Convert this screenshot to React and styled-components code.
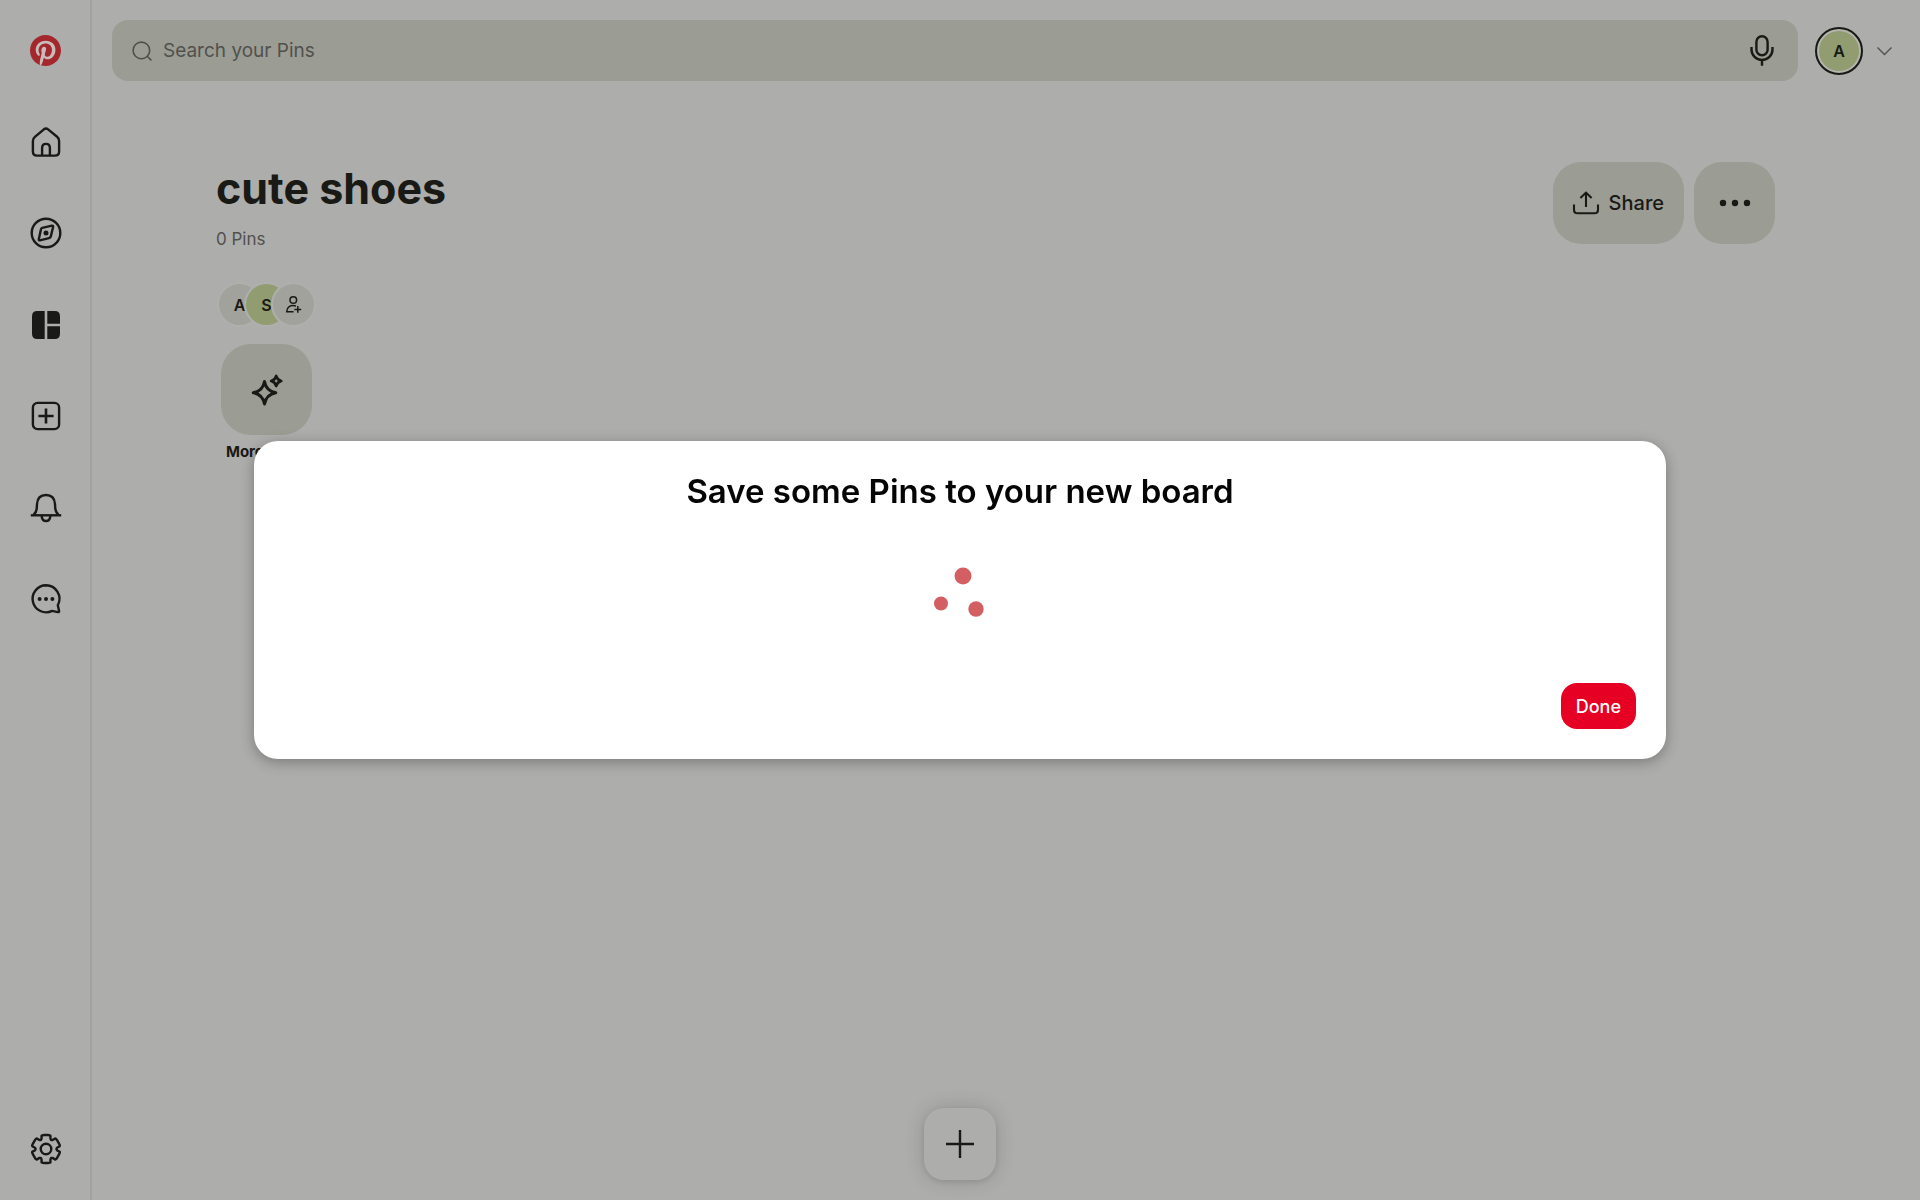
import React from "react";
import styled, { createGlobalStyle } from "styled-components";

const color = {
  page: "#adadab",
  line: "#a2a2a0",
  field: "#9b9c94",
  pale: "#a1a29b",
  green: "#919c70",
  ink: "#191916",
  muted: "#51514c",
  ring: "#b4b4b1",
};

const GlobalStyle = createGlobalStyle`
  *, *::before, *::after { box-sizing: border-box; }
  body {
    margin: 0;
    background: ${color.page};
    color: ${color.ink};
    font-family: Inter, "Liberation Sans", sans-serif;
  }
  button, input { font: inherit; color: inherit; }
  button { border: 0; padding: 0; background: none; cursor: pointer; }
  h1, h2, p { margin: 0; }
`;

const Shell = styled.div`
  display: flex;
  min-height: 100vh;
`;

const Sidebar = styled.aside`
  display: flex;
  flex-direction: column;
  justify-content: space-between;
  flex: none;
  width: 92px;
  padding: 5px 0 6px;
  border-right: 2px solid ${color.line};
`;

const Nav = styled.nav`
  display: flex;
  flex-direction: column;
  height: 549px;
`;

const NavLink = styled.a`
  display: flex;
  align-items: center;
  justify-content: center;
  flex: ${(p) => (p.$fixed ? "none" : "1")};
  height: 91px;
  padding-left: 1px;
  color: inherit;
`;

const Glyph = styled.svg`
  display: block;
  flex: none;
  width: ${(p) => p.$w || 32}px;
  height: ${(p) => p.$h || p.$w || 32}px;
  fill: none;
  stroke: currentColor;
  stroke-width: ${(p) => p.$stroke || 2.4};
  overflow: visible;
`;

const Main = styled.main`
  display: flex;
  flex-direction: column;
  flex: 1;
  min-width: 0;
`;

const TopBar = styled.header`
  display: flex;
  align-items: center;
  padding: 20px 28px 0 20px;
`;

const Search = styled.label`
  display: flex;
  align-items: center;
  flex: 1;
  gap: 11px;
  height: 61px;
  padding: 0 24px 0 20px;
  margin-right: 17px;
  border-radius: 16px;
  background: ${color.field};
  color: ${color.muted};
`;

const SearchInput = styled.input`
  flex: 1;
  min-width: 0;
  padding: 0;
  border: 0;
  outline: 0;
  background: none;
  font-size: 19px;
  line-height: 28px;
  &::placeholder { color: ${color.muted}; opacity: 1; }
`;

const IconButton = styled.button`
  display: flex;
  color: ${(p) => (p.$muted ? color.muted : color.ink)};
`;

const Profile = styled.button`
  display: flex;
  align-items: center;
  justify-content: center;
  width: 48px;
  height: 48px;
  margin-right: 14px;
  border: 2px solid ${color.ink};
  border-radius: 50%;
  background: ${color.green};
  box-shadow: inset 0 0 0 2px ${color.ring};
  font-size: 16px;
  font-weight: 600;
`;

const Board = styled.section`
  padding: 81px 145px 0 124px;
`;

const BoardHead = styled.div`
  display: flex;
  justify-content: space-between;
  align-items: flex-start;
`;

const Title = styled.h1`
  font-size: 43px;
  line-height: 52px;
  font-weight: 700;
`;

const Count = styled.p`
  margin-top: 13px;
  font-size: 17px;
  line-height: 24px;
  color: ${color.muted};
`;

const Actions = styled.div`
  display: flex;
  gap: 10px;
`;

const Action = styled.button`
  display: flex;
  align-items: center;
  justify-content: center;
  gap: 10px;
  height: 82px;
  width: ${(p) => (p.$square ? "81px" : "auto")};
  padding: ${(p) => (p.$square ? 0 : "0 20px")};
  border-radius: 28px;
  background: ${color.field};
  font-size: 20px;
  font-weight: 500;
`;

const People = styled.div`
  display: flex;
  margin-top: 33px;
  padding-left: 3px;
`;

const Person = styled.button`
  display: flex;
  align-items: center;
  justify-content: center;
  width: 41px;
  height: 41px;
  border-radius: 50%;
  background: ${(p) => (p.$green ? color.green : color.pale)};
  box-shadow: 0 0 0 2px #afafad;
  font-size: 16px;
  font-weight: 600;
  & + & { margin-left: -14px; }
`;

const Tool = styled.button`
  display: flex;
  flex-direction: column;
  align-items: center;
  gap: 7px;
  width: 91px;
  margin: 19px 0 0 5px;
  font-size: 15px;
  line-height: 20px;
  font-weight: 700;
  white-space: nowrap;
`;

const Tile = styled.span`
  display: flex;
  align-items: center;
  justify-content: center;
  width: 91px;
  height: 91px;
  border-radius: 30px;
  background: ${color.field};
`;

const Floating = styled.div`
  position: fixed;
  inset: auto 0 20px 0;
  display: flex;
  justify-content: center;
`;

const AddButton = styled.button`
  display: flex;
  align-items: center;
  justify-content: center;
  width: 72px;
  height: 72px;
  border-radius: 20px;
  background: ${color.page};
  box-shadow: 0 0 20px rgba(0, 0, 0, 0.16), 0 2px 6px rgba(0, 0, 0, 0.1);
`;

const Backdrop = styled.div`
  position: fixed;
  inset: 0;
  display: flex;
  align-items: center;
  justify-content: center;
  padding: 0 254px;
`;

const Dialog = styled.section`
  display: flex;
  flex-direction: column;
  flex: 1;
  padding: 28px 30px 30px;
  border-radius: 24px;
  background: #fff;
  box-shadow: 0 3px 14px rgba(0, 0, 0, 0.3);
`;

const DialogTitle = styled.h2`
  font-size: 33px;
  line-height: 44px;
  font-weight: 600;
  color: #050505;
  text-align: center;
`;

const Loading = styled.div`
  display: flex;
  justify-content: center;
  padding: 54px 0 66px;
`;

const DialogFooter = styled.footer`
  display: flex;
  justify-content: flex-end;
`;

const DoneButton = styled.button`
  height: 46px;
  padding: 0 15px;
  border-radius: 16px;
  background: #e60023;
  color: #fff;
  font-size: 18px;
  font-weight: 500;
`;

/* Six-toothed cog: three radii per tooth, every corner softened with a quadratic. */
const cogPath = (() => {
  const pts = [];
  for (let i = 0; i < 6; i += 1) {
    const mid = -90 + i * 60;
    [[-30, 10.2], [-22, 11.6], [-18, 14.7], [18, 14.7], [22, 11.6]].forEach(([offset, r]) => {
      const a = ((mid + offset) * Math.PI) / 180;
      pts.push([16 + r * Math.cos(a), 16 + r * Math.sin(a)]);
    });
  }
  const n = pts.length;
  const lerp = (a, b, t) => [a[0] + (b[0] - a[0]) * t, a[1] + (b[1] - a[1]) * t];
  return (
    pts
      .map((p, i) => {
        const before = lerp(p, pts[(i + n - 1) % n], 0.3);
        const after = lerp(p, pts[(i + 1) % n], 0.3);
        return `${i ? "L" : "M"}${before.join(" ")}Q${p.join(" ")} ${after.join(" ")}`;
      })
      .join("") + "Z"
  );
})();

const navItems = [
  {
    label: "Home",
    art: (
      <>
        <path d="M13.9 3.3 4.9 10.8Q2.9 12.4 2.9 15v10.4q0 4.2 4.2 4.2h17.8q4.2 0 4.2-4.2V15q0-2.6-2-4.2L18.1 3.3q-2.1-1.7-4.2 0Z" />
        <path d="M12.1 29.2V22q0-4.1 3.9-4.1t3.9 4.1v7.2" />
      </>
    ),
  },
  {
    label: "Explore",
    art: (
      <>
        <circle cx="16" cy="16" r="14.3" />
        <path
          d="M12.2 10.8 22 8.7q1.5-.2 1.1 1.3L20.8 19.4q-.4 1.5-1.8 1.8L9.9 23.3q-1.4.3-1.1-1.1l2.1-9.8q.2-1.3 1.3-1.6Z"
          strokeLinejoin="round"
        />
        <circle cx="16" cy="16" r="2.5" fill="currentColor" stroke="none" />
      </>
    ),
  },
  {
    label: "Your boards",
    art: (
      <g fill="currentColor" stroke="none">
        <path d="M14.7 2v28H7.2Q2 30 2 24.8V7.2Q2 2 7.2 2Z" />
        <path d="M17.3 2h7.5Q30 2 30 7.2v7.5H17.3Z" />
        <path d="M17.3 17.3H30v7.5Q30 30 24.8 30h-7.5Z" />
      </g>
    ),
  },
  {
    label: "Create",
    art: (
      <>
        <rect x="2.9" y="2.9" width="26.2" height="26.2" rx="4.6" />
        <path d="M16 8.4v15.2M8.4 16h15.2" strokeWidth="2.6" />
      </>
    ),
  },
  {
    label: "Notifications",
    art: (
      <>
        <path d="M.8 23.3h30.4" />
        <path d="M3.6 22.8Q6.6 20.4 6.8 15.4L7 12Q7.6 3 16 3t9 9l.2 3.4q.2 5 3.2 7.4" />
        <path d="M11.8 24v1q.5 4 4.2 4t4.2-4v-1" />
      </>
    ),
  },
  {
    label: "Messages",
    art: (
      <>
        <path
          d="M16 2.3a13.5 13.5 0 1 0 6.1 25.6l5.8 1.2q1.4.3 1.2-1.2l-1.3-5.7A13.5 13.5 0 0 0 16 2.3Z"
        />
        <g fill="currentColor" stroke="none">
          <circle cx="9.6" cy="16" r="2" />
          <circle cx="16" cy="16" r="2" />
          <circle cx="22.4" cy="16" r="2" />
        </g>
      </>
    ),
  },
];

export default function App() {
  return (
    <>
      <GlobalStyle />
      <Shell>
        <Sidebar>
          <div>
            <NavLink href="#" aria-label="Pinterest" $fixed>
              <Glyph viewBox="0 0 24 24" $w={31}>
                <circle cx="12" cy="12" r="11.6" fill="#c9bdb9" stroke="none" />
                <path
                  fill="#a3272c"
                  stroke="none"
                  d="M0 12c0 5.123 3.211 9.497 7.73 11.218-.11-.937-.227-2.482.025-3.566.217-.932 1.401-5.938 1.401-5.938s-.357-.715-.357-1.774c0-1.66.962-2.9 2.161-2.9 1.02 0 1.512.765 1.512 1.682 0 1.025-.653 2.557-.99 3.978-.281 1.189.597 2.159 1.769 2.159 2.123 0 3.756-2.239 3.756-5.471 0-2.861-2.056-4.86-4.991-4.86-3.398 0-5.393 2.549-5.393 5.184 0 1.027.395 2.127.889 2.726a.36.36 0 0 1 .083.343c-.091.378-.293 1.189-.332 1.355-.053.218-.173.265-.4.159-1.492-.694-2.424-2.875-2.424-4.627 0-3.769 2.737-7.229 7.892-7.229 4.144 0 7.365 2.953 7.365 6.899 0 4.117-2.595 7.431-6.199 7.431-1.211 0-2.348-.63-2.738-1.373 0 0-.599 2.282-.744 2.84-.282 1.084-1.064 2.456-1.549 3.235C9.584 23.815 10.77 24 12 24c6.627 0 12-5.373 12-12S18.627 0 12 0 0 5.373 0 12"
                />
              </Glyph>
            </NavLink>
            <Nav aria-label="Main">
              {navItems.map((item) => (
                <NavLink key={item.label} href="#" aria-label={item.label}>
                  <Glyph viewBox="0 0 32 32">{item.art}</Glyph>
                </NavLink>
              ))}
            </Nav>
          </div>
          <NavLink href="#" aria-label="Settings" $fixed>
            <Glyph viewBox="0 0 32 32">
              <path d={cogPath} strokeLinejoin="round" />
              <circle cx="16" cy="16" r="5.3" />
            </Glyph>
          </NavLink>
        </Sidebar>

        <Main>
          <TopBar>
            <Search>
              <Glyph viewBox="0 0 20 20" $w={20} $stroke={1.6}>
                <circle cx="9.4" cy="9.4" r="8.3" />
                <path d="m15.2 15.2 4.2 4.2" />
              </Glyph>
              <SearchInput type="search" placeholder="Search your Pins" aria-label="Search your Pins" />
              <IconButton type="button" aria-label="Search by voice">
                <Glyph viewBox="0 0 24 31" $w={24} $h={31}>
                  <rect x="6.4" y="1.3" width="11.2" height="19" rx="5.6" />
                  <path d="M1.5 12v2.4a10.5 10.5 0 0 0 21 0V12M12 25v5.8" />
                </Glyph>
              </IconButton>
            </Search>
            <Profile type="button" aria-label="Your profile">A</Profile>
            <IconButton type="button" aria-label="Accounts" $muted>
              <Glyph viewBox="0 0 15 9" $w={15} $h={9} $stroke={1.4}>
                <path d="m.5 1.5 7 7 7-7" />
              </Glyph>
            </IconButton>
          </TopBar>

          <Board>
            <BoardHead>
              <div>
                <Title>cute shoes</Title>
                <Count>0 Pins</Count>
              </div>
              <Actions>
                <Action type="button">
                  <Glyph viewBox="0 0 26 24" $w={26} $h={24} $stroke={2.1}>
                    <path d="M1 13.5v5.2q0 3.6 3.6 3.6h16.8q3.6 0 3.6-3.6v-5.2M13 16V2M7.4 7 13 1.6 18.6 7" />
                  </Glyph>
                  Share
                </Action>
                <Action type="button" aria-label="More options" $square>
                  <Glyph viewBox="0 0 32 8" $w={32} $h={8}>
                    <g fill="currentColor" stroke="none">
                      <circle cx="4" cy="4" r="3.2" />
                      <circle cx="16" cy="4" r="3.2" />
                      <circle cx="28" cy="4" r="3.2" />
                    </g>
                  </Glyph>
                </Action>
              </Actions>
            </BoardHead>
            <People>
              <Person type="button">A</Person>
              <Person type="button" $green>S</Person>
              <Person type="button" aria-label="Invite collaborators">
                <Glyph viewBox="0 0 16 17" $w={16} $h={17} $stroke={1.5}>
                  <circle cx="7.3" cy="4" r="3.3" />
                  <path d="M10 9.9q-9-1.6-9.3 5.8h6.9M11.8 10v6.8M8.4 13.4h6.8" />
                </Glyph>
              </Person>
            </People>
            <Tool type="button">
              <Tile>
                <Glyph viewBox="0 0 32 32">
                  <path
                    d="M13.5 7.4q1.7 9.6 11.3 11.3-9.6 1.7-11.3 11.3-1.7-9.6-11.3-11.3 9.6-1.7 11.3-11.3Z"
                    strokeWidth="3"
                    strokeLinejoin="round"
                  />
                  <path
                    d="M25.2 2q1 4 5 5-4 1-5 5-1-4-5-5 4-1 5-5Z"
                    strokeWidth="2.8"
                    strokeLinejoin="round"
                  />
                </Glyph>
              </Tile>
              More ideas
            </Tool>
          </Board>
        </Main>
      </Shell>

      <Floating>
        <AddButton type="button" aria-label="Add">
          <Glyph viewBox="0 0 28 28" $w={28}>
            <path d="M14 0v28M0 14h28" />
          </Glyph>
        </AddButton>
      </Floating>

      <Backdrop>
        <Dialog role="dialog" aria-modal="true" aria-labelledby="dialog-title">
          <DialogTitle id="dialog-title">Save some Pins to your new board</DialogTitle>
          <Loading role="status" aria-label="Loading">
            <Glyph viewBox="0 0 50 50" $w={50}>
              <g fill="#d35f63" stroke="none">
                <circle cx="28" cy="9" r="8.5" />
                <circle cx="6" cy="36.5" r="7" />
                <circle cx="41" cy="42" r="7.7" />
              </g>
            </Glyph>
          </Loading>
          <DialogFooter>
            <DoneButton type="button">Done</DoneButton>
          </DialogFooter>
        </Dialog>
      </Backdrop>
    </>
  );
}
